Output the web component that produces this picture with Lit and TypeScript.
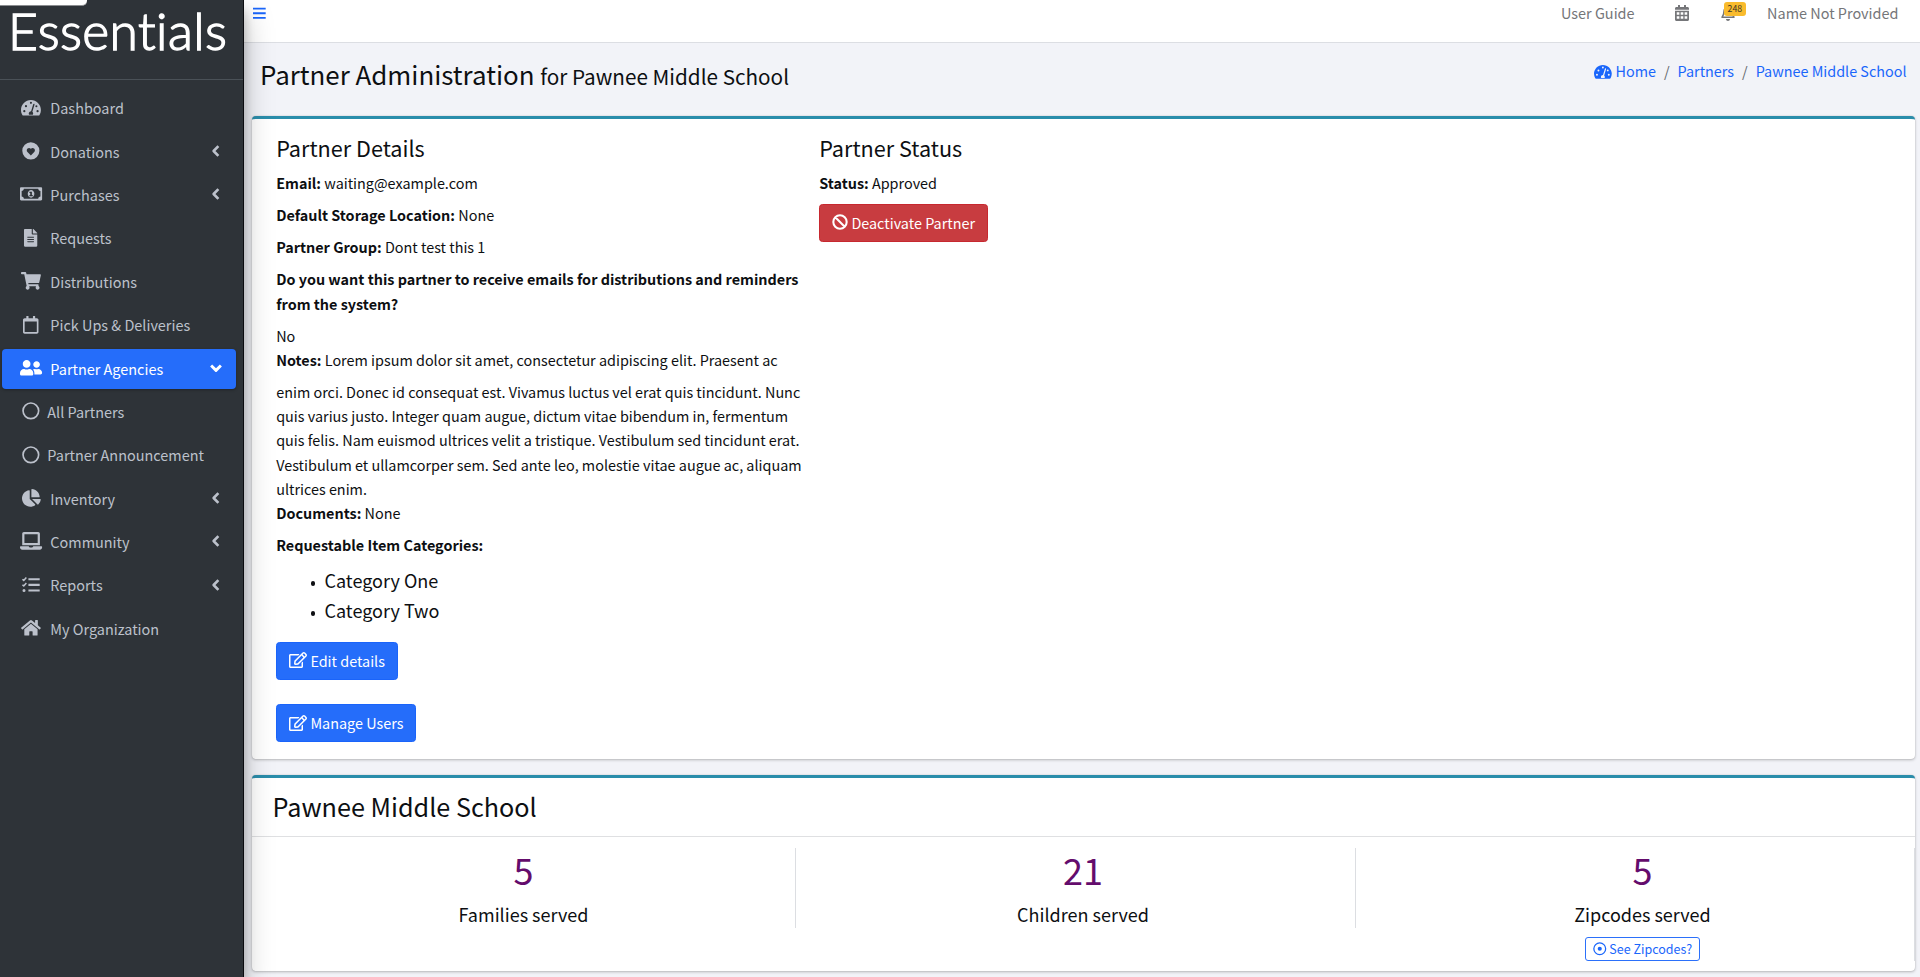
import { LitElement, html, css, svg } from "lit";
import { customElement, property } from "lit/decorators.js";
import { classMap } from "lit/directives/class-map.js";

/* closed circle as a subpath */
const dot = (x: number, y: number, r: number) =>
  `M${x - r} ${y}a${r} ${r} 0 1 0 ${2 * r} 0a${r} ${r} 0 1 0 ${-2 * r} 0z`;

const box = (x: number, y: number, w: number, h: number) => `M${x} ${y}h${w}v${h}h${-w}z`;

type Glyph = { w: number; d: string } | { w: number; s: string; sw: number; d?: string };

const glyphs: Record<string, Glyph> = {
  tachometer: {
    w: 576,
    d:
      "M288 32C128.94 32 0 160.94 0 320c0 52.8 14.25 102.26 39.06 144.8 5.61 9.62 16.3 15.2 27.44 15.2h443c11.14 0 21.83-5.58 27.44-15.2C561.75 422.26 576 372.8 576 320c0-159.06-128.94-288-288-288z" +
      dot(96, 352, 32) + dot(144, 208, 32) + dot(288, 112, 30) + dot(480, 352, 32) + dot(446, 208, 30) +
      "M384 138c-13-4-26 3-30 16l-62 202c-38 2-68 30-68 65 0 12 3 24 9 33h110c6-9 9-21 9-33 0-20-9-38-23-50l62-204c4-13-3-26-7-29z",
  },
  donate: {
    w: 512,
    d:
      dot(256, 256, 248) +
      "M256 392l-98-102c-28-30-27-78 4-104 27-23 67-19 92 7l2 3 2-3c25-26 65-30 92-7 31 26 32 74 4 104z",
  },
  money: {
    w: 640,
    d:
      "M608 64H32C14.300 64 0 78.300 0 96v320c0 17.700 14.300 32 32 32h576c17.700 0 32-14.300 32-32V96c0-17.700-14.300-32-32-32zM48 336v-160c35 0 64-29 64-64h416c0 35 29 64 64 64v160c-35 0-64 29-64 64H112c0-35-29-64-64-64z" +
      "M320 144c-53 0-96 50-96 112s43 112 96 112 96-50 96-112-43-112-96-112zM272 192h72v96h24v36h-96v-36h24v-60h-24z",
  },
  file: {
    w: 384,
    d: "M224 136V0H24C10.700 0 0 10.700 0 24v464c0 13.300 10.700 24 24 24h336c13.300 0 24-10.700 24-24V160H248c-13.200 0-24-10.800-24-24zm64 236c0 6.600-5.400 12-12 12H108c-6.600 0-12-5.400-12-12v-8c0-6.600 5.400-12 12-12h168c6.600 0 12 5.400 12 12v8zm0-64c0 6.600-5.400 12-12 12H108c-6.600 0-12-5.400-12-12v-8c0-6.600 5.400-12 12-12h168c6.600 0 12 5.400 12 12v8zm0-72v8c0 6.600-5.400 12-12 12H108c-6.600 0-12-5.400-12-12v-8c0-6.600 5.400-12 12-12h168c6.600 0 12 5.400 12 12zm96-114.100v6.100H256V0h6.100c6.400 0 12.500 2.500 17 7l97.900 98c4.500 4.500 7 10.600 7 16.900z",
  },
  cart: {
    w: 576,
    d: "M528.12 301.319l47.273-208C578.806 78.301 567.391 64 551.99 64H159.208l-9.166-44.81C147.758 8.021 137.93 0 126.529 0H24C10.745 0 0 10.745 0 24v16c0 13.255 10.745 24 24 24h69.883l70.248 343.435C147.325 417.1 136 435.222 136 456c0 30.928 25.072 56 56 56s56-25.072 56-56c0-15.674-6.447-29.835-16.824-40h209.647C430.447 426.165 424 440.326 424 456c0 30.928 25.072 56 56 56s56-25.072 56-56c0-22.172-12.888-41.332-31.579-50.405l5.517-24.276c3.413-15.018-8.002-29.319-23.403-29.319H218.117l-6.545-32h293.145c11.206 0 20.92-7.754 23.403-18.681z",
  },
  calendar: {
    w: 448,
    d: "M400 64h-48V12c0-6.600-5.400-12-12-12h-40c-6.600 0-12 5.400-12 12v52H160V12c0-6.600-5.400-12-12-12h-40c-6.600 0-12 5.400-12 12v52H48C21.500 64 0 85.500 0 112v352c0 26.500 21.500 48 48 48h352c26.500 0 48-21.500 48-48V112c0-26.500-21.500-48-48-48zm-6 400H54c-3.300 0-6-2.700-6-6V160h352v298c0 3.300-2.700 6-6 6z",
  },
  calendarGrid: {
    w: 448,
    d:
      "M400 64h-48V12c0-6.600-5.400-12-12-12h-40c-6.600 0-12 5.400-12 12v52H160V12c0-6.600-5.400-12-12-12h-40c-6.600 0-12 5.400-12 12v52H48C21.500 64 0 85.500 0 112v352c0 26.500 21.500 48 48 48h352c26.500 0 48-21.500 48-48V112c0-26.500-21.500-48-48-48z" +
      box(0, 150, 448, 32) +
      [56, 182, 308].map((x) => box(x, 232, 84, 80) + box(x, 360, 84, 80)).join(""),
  },
  users: {
    w: 640,
    d: "M192 256c61.900 0 112-50.100 112-112S253.900 32 192 32 80 82.100 80 144s50.100 112 112 112zm76.800 32h-8.300c-20.800 10-43.900 16-68.500 16s-47.600-6-68.500-16h-8.300C51.600 288 0 339.600 0 403.200V432c0 26.500 21.500 48 48 48h288c26.500 0 48-21.500 48-48v-28.800c0-63.600-51.600-115.200-115.200-115.200zM480 256c53 0 96-43 96-96s-43-96-96-96-96 43-96 96 43 96 96 96zm48 32h-3.800c-13.900 4.800-28.600 8-44.200 8s-30.300-3.200-44.200-8H432c-20.400 0-39.200 5.900-55.700 15.400 24.400 26.300 39.700 61.200 39.700 99.800v38.400c0 2.200-.5 4.300-.6 6.400H592c26.500 0 48-21.500 48-48 0-61.900-50.100-112-112-112z",
  },
  circle: { w: 512, s: dot(256, 256, 226), sw: 48 },
  dotCircle: { w: 512, s: dot(256, 256, 224), sw: 48, d: dot(256, 256, 78) },
  ban: { w: 512, s: dot(256, 256, 214) + "M105 105L407 407", sw: 66 },
  pie: {
    w: 544,
    d: "M527.79 288H290.5l158.03 158.03c6.04 6.04 15.98 6.53 22.19.68 38.7-36.46 65.32-85.61 73.13-140.86 1.34-9.46-6.51-17.85-16.06-17.85zm-15.83-64.8C503.72 103.74 408.26 8.28 288.8.04 279.68-.59 272 7.1 272 16.24V240h223.77c9.14 0 16.82-7.68 16.19-16.8zM224 288V50.71c0-9.55-8.39-17.4-17.84-16.06C86.99 51.49-4.1 155.6.14 280.37 4.5 408.51 114.83 513.59 243.03 511.98c50.4-.63 96.97-16.87 135.26-44.03 7.9-5.6 8.42-17.23 1.57-24.08L224 288z",
  },
  laptop: {
    w: 640,
    d: "M624 416H381.540c-.74 19.810-14.710 32-32.740 32H288c-18.690 0-33.020-17.470-32.770-32H16c-8.800 0-16 7.200-16 16v16c0 35.200 28.800 64 64 64h512c35.200 0 64-28.800 64-64v-16c0-8.800-7.200-16-16-16zM576 48c0-26.400-21.600-48-48-48H112C85.600 0 64 21.600 64 48v336h512V48zm-64 272H128V64h384v256z",
  },
  tasks: {
    w: 512,
    d: box(186, 64, 326, 60) + box(186, 226, 326, 60) + box(186, 388, 326, 60) + dot(58, 418, 44),
    s: "M14 92l36 36 76-84M14 252l36 36 76-84",
    sw: 44,
  },
  home: {
    w: 576,
    d: "M280.37 148.26L96 300.11V464a16 16 0 0 0 16 16l112.06-.29a16 16 0 0 0 15.92-16V368a16 16 0 0 1 16-16h64a16 16 0 0 1 16 16v95.64a16 16 0 0 0 16 16.05L464 480a16 16 0 0 0 16-16V300L295.67 148.26a12.19 12.19 0 0 0-15.3 0zM571.6 251.47L488 182.56V44.05a12 12 0 0 0-12-12h-56a12 12 0 0 0-12 12v72.61L318.47 43a48 48 0 0 0-61 0L4.34 251.47a12 12 0 0 0-1.6 16.9l25.5 31A12 12 0 0 0 45.15 301l235.22-193.74a12.19 12.19 0 0 1 15.3 0L530.9 301a12 12 0 0 0 16.9-1.6l25.5-31a12 12 0 0 0-1.7-16.93z",
  },
  edit: {
    w: 576,
    d: "M402.3 344.9l32-32c5-5 13.7-1.5 13.7 5.7V464c0 26.5-21.5 48-48 48H48c-26.5 0-48-21.5-48-48V112c0-26.5 21.5-48 48-48h273.5c7.1 0 10.7 8.600 5.7 13.7l-32 32c-1.5 1.5-3.5 2.3-5.7 2.3H48v352h352V350.5c0-2.1.8-4.1 2.3-5.6zm156.6-201.8L296.3 405.7l-90.4 10c-26.2 2.9-48.5-19.2-45.6-45.6l10-90.4L432.9 17.1c22.9-22.9 59.9-22.9 82.7 0l43.2 43.2c22.9 22.9 22.9 60 .1 82.8zM460.1 174L402 115.9 216.2 301.8l-7.3 65.3 65.3-7.3L460.1 174zm64.8-79.7l-43.2-43.2c-4.1-4.1-10.8-4.1-14.8 0L436 82l58.1 58.1 30.9-30.9c4-4.2 4-10.8-.1-14.9z",
  },
  bell: {
    w: 448,
    s: "M32 390c40-44 62-70 62-182 0-78 58-136 130-136s130 58 130 136c0 112 22 138 62 182zM224 20v48",
    sw: 48,
    d: "M160 448h128c0 35-29 64-64 64s-64-29-64-64z",
  },
  left: { w: 320, s: "M236 100L84 256l152 156", sw: 84 },
  down: { w: 512, s: "M100 176L256 332 412 176", sw: 92 },
  bars: { w: 448, d: box(0, 60, 448, 66) + box(0, 223, 448, 66) + box(0, 386, 448, 66) },
};

@customElement("fa-icon")
class FaIcon extends LitElement {
  @property() name = "";
  static styles = css`
    :host { display: inline-flex; flex: none; line-height: 0; }
    .g { height: 1em; width: auto; display: block; overflow: visible; }
  `;
  render() {
    const g = glyphs[this.name] as any;
    return html`<svg class="g" viewBox="0 0 ${g.w} 512" fill="currentColor">
      ${g.d ? svg`<path fill-rule="evenodd" d=${g.d}></path>` : null}
      ${g.s ? svg`<path fill="none" stroke="currentColor" stroke-width=${g.sw} stroke-linejoin="round" d=${g.s}></path>` : null}
    </svg>`;
  }
}

const menu: { icon: string; label: string; more?: string; active?: boolean; sub?: boolean }[] = [
  { icon: "tachometer", label: "Dashboard" },
  { icon: "donate", label: "Donations", more: "left" },
  { icon: "money", label: "Purchases", more: "left" },
  { icon: "file", label: "Requests" },
  { icon: "cart", label: "Distributions" },
  { icon: "calendar", label: "Pick Ups & Deliveries" },
  { icon: "users", label: "Partner Agencies", more: "down", active: true },
  { icon: "circle", label: "All Partners", sub: true },
  { icon: "circle", label: "Partner Announcement", sub: true },
  { icon: "pie", label: "Inventory", more: "left" },
  { icon: "laptop", label: "Community", more: "left" },
  { icon: "tasks", label: "Reports", more: "left" },
  { icon: "home", label: "My Organization" },
];

@customElement("app-sidebar")
class AppSidebar extends LitElement {
  static styles = css`
    :host { display: flex; flex-direction: column; width: 244px; height: 977px; box-sizing: border-box; background: #2e3338; border-right: 1px solid #0b0c10; color: #bcc1cb; flex: none; z-index: 2; box-shadow: 0 14px 28px rgba(0,0,0,.25), 0 10px 10px rgba(0,0,0,.22); }
    .corner { position: absolute; left: 0; top: 0; width: 87px; height: 5px; background: #fff; border-bottom-right-radius: 5px; border-bottom: 1px solid #8b8d90; }
    .brand { height: 79px; box-sizing: content-box; border-bottom: 1px solid #4a5157; padding-left: 8px; color: #fff; font: 300 51.5px/60.500px Lato, sans-serif; font-variant-ligatures: none; letter-spacing: 0.4px; -webkit-text-stroke: 1.4px #fff; white-space: nowrap; }
    .menu { display: flex; flex-direction: column; gap: 3.2px; padding: 8.400px 7px 0 1.5px; }
    .row { display: flex; align-items: center; height: 40.200px; border-radius: 4px; line-height: 24px; padding-right: 13px; font-size: 14.45px; }
    .active { background: #256dfa; color: #fff; box-shadow: 0 1px 3px rgba(0,0,0,.3); }
    .ic { width: 59px; display: flex; justify-content: center; font-size: 17.700px; margin-right: -10.2px; padding-bottom: 2px; }
    .txt { flex: 1; white-space: nowrap; padding-bottom: .4px; }
    .sub .txt { margin-left: -3px; }
    .more { width: 14px; display: flex; justify-content: center; font-size: 16px; padding-bottom: 2px; }
  `;
  render() {
    return html`
      <div class="brand">Essentials</div>
      <div class="corner"></div>
      <nav class="menu">
        ${menu.map((m) => html`<div class=${classMap({ row: true, active: !!m.active, sub: !!m.sub })}>
          <span class="ic"><fa-icon name=${m.icon}></fa-icon></span>
          <span class="txt">${m.label}</span>
          ${m.more ? html`<span class="more"><fa-icon name=${m.more}></fa-icon></span>` : null}
        </div>`)}
      </nav>`;
  }
}

@customElement("app-root")
class AppRoot extends LitElement {
  static styles = css`
    :host { display: flex; height: 977px; overflow: hidden; background: #f2f3f8; color: #0d0f12; font-family: "Noto Sans CJK SC", sans-serif; font-size: 14.4px; line-height: 24.130px; }
    .main { flex: 1; min-width: 0; display: flex; flex-direction: column; }
    .nav { height: 43px; flex: none; box-sizing: border-box; border-bottom: 1px solid #dcdee3; background: #fff; display: flex; align-items: flex-start; color: #757679; padding: 1px 21.5px 0 9px; font-size: 14.45px; }
    .nav fa-icon { font-size: 16px; margin-top: 4px; }
    .nav .burger { color: #1a66fb; margin-right: auto; font-size: 14.5px; margin-top: 4.500px; }
    .cal { margin: 0 32.500px 0 40px; }
    .bell { position: relative; display: flex; margin-right: 32px; }
    .badge { position: absolute; left: 3px; top: 1px; width: 21.5px; height: 14px; border-radius: 3px; background: #f9bb2d; color: #3b3423; font-size: 8.700px; line-height: 13.5px; text-align: center; }
    .head { height: 73px; flex: none; display: flex; justify-content: space-between; padding: 0 13.5px 0 16px; }
    .title { margin: 0; font-weight: 400; font-size: 25.900px; line-height: 35px; padding-top: 13px; height: 35px; white-space: nowrap; }
    .small { font-size: 20.700px; }
    .crumbs { display: flex; align-items: center; height: 24px; margin-top: 16.500px; color: #1a66fb; font-size: 14.38px; }
    .crumbs fa-icon { font-size: 15.800px; margin-right: 3.500px; }
    .sep { color: #63676d; padding: 0 8px; }
    .card { margin: 0 5px 0 8px; box-sizing: border-box; background: #fff; border-top: 3px solid #2a8dab; border-radius: 4px; box-shadow: 0 0 1px rgba(0,0,0,.2), 0 1px 3px rgba(0,0,0,.25); flex: none; }
    .details { height: 643px; display: flex; padding: 13.8px 24px 0 24.200px; margin-bottom: 16px; }
    .col { width: 527px; margin-right: 16px; }
    h3 { margin: 0 0 9px; font-weight: 400; font-size: 21.650px; line-height: 29px; }
    p { margin: 0 0 8.100px; }
    .flush { margin: 0; }
    ul { margin: 0 0 16.500px; padding: 0 0 0 34.5px; font-size: 18.050px; line-height: 30.100px; list-style: none; }
    .item { display: flex; align-items: center; }
    .item::before { content: ""; width: 4.800px; height: 4.800px; border-radius: 50%; background: currentColor; margin: 6px 9px 0 0; }
    .btn { display: flex; align-items: center; gap: 3.200px; width: max-content; height: 38px; box-sizing: border-box; padding: 0 12px; border-radius: 3.5px; background: #256dfa; border: 1px solid #1a64fa; color: #fff; font-size: 14.4px; margin-bottom: 24.5px; }
    .btn fa-icon, .zip fa-icon { font-size: 16px; margin-top: -1px; }
    .danger { background: #c83c40; border-color: #c7282f; margin-top: 8.800px; }
    .stats { height: 196px; }
    h2 { margin: 0; font-weight: 400; font-size: 25.200px; line-height: 34px; padding: 11.400px 0 12.600px 20.5px; border-bottom: 1px solid #dfe0e2; }
    .grid { display: grid; grid-template-columns: repeat(3, 1fr); gap: 15.400px; align-items: start; padding-top: 11px; }
    .stat { border-right: 1px solid #dcdee2; display: flex; flex-direction: column; align-items: center; }
    .num { font-size: 36px; line-height: 43px; color: #640c6c; height: 52.900px; }
    .lab { font-size: 18px; line-height: 27px; }
    .zip { display: flex; align-items: center; gap: 3px; margin-top: 9px; box-sizing: border-box; height: 24px; padding: 0 7px; border: 1px solid #2b70fa; border-radius: 3px; color: #1a66fb; font-size: 12.500px; }
    .zip fa-icon { font-size: 13.500px; }
  `;
  private line(k: string, v = "") {
    return html`<p><b>${k}</b> ${v}</p>`;
  }
  render() {
    return html`
      <app-sidebar></app-sidebar>
      <div class="main">
        <div class="nav">
          <fa-icon class="burger" name="bars"></fa-icon>
          <span>User Guide</span>
          <fa-icon class="cal" name="calendarGrid"></fa-icon>
          <span class="bell"><fa-icon name="bell"></fa-icon><span class="badge">248</span></span>
          <span>Name Not Provided</span>
        </div>
        <div class="head">
          <h1 class="title">Partner Administration <span class="small">for Pawnee Middle School</span></h1>
          <div class="crumbs">
            <fa-icon name="tachometer"></fa-icon><span>Home</span><span class="sep">/</span><span>Partners</span><span class="sep">/</span><span>Pawnee Middle School</span>
          </div>
        </div>
        <section class="card details">
          <div class="col">
            <h3>Partner Details</h3>
            ${this.line("Email:", "waiting@example.com")}
            ${this.line("Default Storage Location:", "None")}
            ${this.line("Partner Group:", "Dont test this 1")}
            ${this.line("Do you want this partner to receive emails for distributions and reminders from the system?")}
            <p class="flush">No</p>
            ${this.line("Notes:", "Lorem ipsum dolor sit amet, consectetur adipiscing elit. Praesent ac")}
            <p class="flush">enim orci. Donec id consequat est. Vivamus luctus vel erat quis tincidunt. Nunc quis varius justo. Integer quam augue, dictum vitae bibendum in, fermentum quis felis. Nam euismod ultrices velit a tristique. Vestibulum sed tincidunt erat. Vestibulum et ullamcorper sem. Sed ante leo, molestie vitae augue ac, aliquam ultrices enim.</p>
            ${this.line("Documents:", "None")}
            ${this.line("Requestable Item Categories:")}
            <ul><li class="item">Category One</li><li class="item">Category Two</li></ul>
            <div class="btn"><fa-icon name="edit"></fa-icon>Edit details</div>
            <div class="btn"><fa-icon name="edit"></fa-icon>Manage Users</div>
          </div>
          <div>
            <h3>Partner Status</h3>
            ${this.line("Status:", "Approved")}
            <div class="btn danger"><fa-icon name="ban"></fa-icon>Deactivate Partner</div>
          </div>
        </section>
        <section class="card stats">
          <h2>Pawnee Middle School</h2>
          <div class="grid">
            ${[["5", "Families served"], ["21", "Children served"], ["5", "Zipcodes served"]].map(
              ([n, l], i) => html`<div class="stat">
                <div class="num">${n}</div>
                <div class="lab">${l}</div>
                ${i === 2 ? html`<div class="zip"><fa-icon name="dotCircle"></fa-icon>See Zipcodes?</div>` : null}
              </div>`
            )}
          </div>
        </section>
      </div>`;
  }
}
